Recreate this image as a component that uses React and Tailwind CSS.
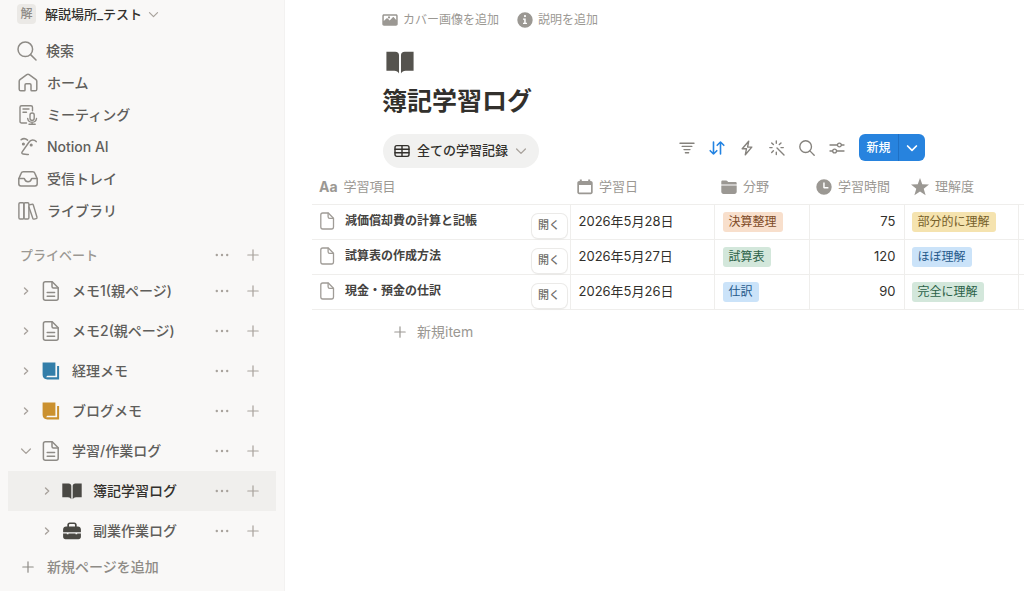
import clsx from 'clsx';

// Shared wrapper for outline icons
function Stroke({ className, box = 20, width = 1.3, children }) {
  return (
    <svg
      className={clsx('shrink-0', className)}
      viewBox={`0 0 ${box} ${box}`}
      fill="none"
      stroke="currentColor"
      strokeWidth={width}
      strokeLinecap="round"
      strokeLinejoin="round"
      aria-hidden="true"
    >
      {children}
    </svg>
  );
}

function Solid({ className, box = 20, children }) {
  return (
    <svg className={clsx('shrink-0', className)} viewBox={`0 0 ${box} ${box}`} fill="currentColor" aria-hidden="true">
      {children}
    </svg>
  );
}

const ChevronDown = ({ className, width = 1.3 }) => (
  <Stroke className={className} box={12} width={width}>
    <path d="M1.600 4l4.400 4.400L10.400 4" />
  </Stroke>
);

const ChevronRight = ({ className }) => (
  <Stroke className={className} box={12} width={1.4}>
    <path d="M4.500 3L7.700 6l-3.200 3" />
  </Stroke>
);

const Plus = ({ className }) => (
  <Stroke className={className} box={12} width={1.2}>
    <path d="M6 .8v10.4M.8 6h10.4" />
  </Stroke>
);

const Dots = () => (
  <svg className="h-1 w-3.5" viewBox="0 0 14 4" fill="currentColor" aria-hidden="true">
    <circle cx="1.800" cy="2" r="1.200" />
    <circle cx="7" cy="2" r="1.200" />
    <circle cx="12.200" cy="2" r="1.200" />
  </svg>
);

const SearchIcon = ({ className, width = 1.5 }) => (
  <Stroke className={className} width={width}>
    <circle cx="8.3" cy="8.3" r="7.300" />
    <path d="M13.6 13.6l5.400 5.400" />
  </Stroke>
);

const HomeIcon = () => (
  <Stroke className="size-5" width={1.5}>
    <path d="M1.2 8.2c0-.7.3-1.2.8-1.6l6.8-4.9c.7-.5 1.700-.5 2.400 0L18 6.600c.5.4.8.9.8 1.600v8c0 .9-.7 1.600-1.600 1.600h-3.400a.8.8 0 0 1-.8-.8v-5c0-.7-.5-1.200-1.200-1.200H8.200c-.7 0-1.200.5-1.200 1.200v5c0 .5-.4.8-.8.8H2.800c-.9 0-1.600-.7-1.600-1.600z" />
  </Stroke>
);

const MeetingIcon = () => (
  <Stroke className="size-5" width={1.4}>
    <path d="M8.500 18H3.600c-.9 0-1.600-.7-1.600-1.600V2.300C2 1.400 2.700.7 3.600.7h9.300c.9 0 1.600.7 1.600 1.600v3.400" />
    <path d="M5 4h6M5 7.200h3.500" />
    <rect x="12" y="8" width="4.200" height="7.400" rx="2.100" />
    <path d="M9.700 13.500c.3 2.200 2.100 3.700 4.400 3.700s4.100-1.500 4.400-3.700M14.100 17.200v2.100M11 19.300h6.200" />
  </Stroke>
);

const AiIcon = () => (
  <Stroke className="size-5" width={1.5}>
    <path d="M3.200 2.700C5 1.400 7.600 1.400 9.600 3.100M18.200 4.600C16.200 2.200 12.800 2.300 11.100 5L4.200 14.900c-.7 1-.3 2 .9 2.200 1.800.3 3.400.4 5.200.300" />
    <circle cx="5.400" cy="7" r=".8" fill="currentColor" />
    <circle cx="13.200" cy="8" r=".8" fill="currentColor" />
  </Stroke>
);

const InboxIcon = () => (
  <Stroke className="size-5" width={1.5}>
    <path d="M.8 9.800v5c0 1.300.9 2.200 2.200 2.200h14c1.300 0 2.200-.9 2.200-2.200v-5L17 4.600C16.600 3.500 15.800 2.800 14.600 2.800H5.400c-1.200 0-2 .7-2.400 1.800z" />
    <path d="M.9 9.600h5c.4 0 .7.300.8.700.4 1.500 1.500 2.400 3.300 2.400s2.900-.9 3.300-2.400c.1-.4.400-.7.800-.7h5" />
  </Stroke>
);

const LibraryIcon = () => (
  <Stroke className="size-5" width={1.4}>
    <rect x=".9" y="1.800" width="5" height="16.200" rx="1.200" />
    <rect x="5.900" y="1.800" width="5" height="16.200" rx="1.200" />
    <path d="M11.300 3.900l2.700-.7c.6-.2 1.100.2 1.300.8l3.700 12.300c.2.600-.2 1.200-.8 1.300l-2.100.5c-.6.200-1.200-.2-1.300-.8L10.900 6" />
  </Stroke>
);

const PageIcon = () => (
  <Stroke className="h-5 w-5" width={1.5}>
    <path d="M4.400.8h6.800l6 6v10.400c0 1.100-.9 2-2 2H4.400c-1.100 0-2-.9-2-2V2.800c0-1.100.9-2 2-2z" />
    <path d="M11 1v4.500c0 .9.600 1.500 1.500 1.500H17M6.200 11.600h7.400M6.200 15.200h7.400" />
  </Stroke>
);

const DocIcon = () => (
  <Stroke className="size-[18px]" box={18} width={1.3}>
    <path d="M4.700 1h5.600l5.200 5.200v8.900c0 1-.8 1.900-1.900 1.900H4.700c-1 0-1.900-.8-1.900-1.900V2.900C2.800 1.800 3.700 1 4.700 1z" />
    <path d="M10.100 1.200v3.600c0 1 .6 1.600 1.600 1.600h3.600" />
  </Stroke>
);

const JournalIcon = ({ className }) => (
  <Solid className={clsx('size-5', className)}>
    <path d="M1.600 1.400h12.800v13.400H6.200l-1.100 1.400h11V5h2v13.400H6.300c-2.700 0-4.700-1.700-4.700-4.400z" />
  </Solid>
);

const BookIcon = ({ className }) => (
  <Solid className={className}>
    <path d="M.3 2.600h6.300c1.700 0 2.700.9 2.700 2.500v13.200C8.500 17 7.600 16.300 6 16.300H.3z" />
    <path d="M19.700 2.600h-6.300c-1.700 0-2.700.9-2.700 2.500v13.200c.8-1.300 1.700-2 3.300-2h5.700z" />
  </Solid>
);

const BriefcaseIcon = () => (
  <Solid className="size-5 text-[#4a4944]">
    <path
      fillRule="evenodd"
      d="M5.300 5.500V3.800c0-1.400 1-2.400 2.400-2.400h4.600c1.400 0 2.400 1 2.400 2.400v1.700h1.200c1.700 0 3 1.300 3 3v2.800H1.100V8.500c0-1.700 1.300-3 3-3zm1.700 0h6V3.900c0-.5-.3-.8-.8-.8H7.800c-.5 0-.8.300-.8.800z"
    />
    <path d="M1.100 12.400h3.700v.9h1.700v-.9h7v.9h1.700v-.9h3.700v3.400c0 1.400-1 2.400-2.400 2.400h-13c-1.400 0-2.400-1-2.400-2.400z" />
  </Solid>
);

const CalendarIcon = () => (
  <Solid className="size-4" box={16}>
    <path
      fillRule="evenodd"
      d="M2.800.4h2v1.500h6.400V.4h2v1.500h.6c1.100 0 1.900.8 1.900 1.900v9.500c0 1.100-.8 1.900-1.900 1.900H2.200C1.100 15.200.3 14.400.3 13.300V3.800C.3 2.700 1.100 1.900 2.200 1.900h.6zM2 6v7c0 .4.2.6.600.6h10.800c.400 0 .600-.200.600-.600V6z"
    />
  </Solid>
);

const FolderIcon = () => (
  <Solid className="size-4" box={16}>
    <path d="M.3 5.400V2.800c0-.8.5-1.300 1.300-1.300h3.600c.500 0 .800.200 1.100.500l.8.900h7.200c.9 0 1.400.5 1.400 1.300v1.200z" />
    <path d="M.3 6.600h15.400v6c0 1.400-.9 2.300-2.300 2.300H2.600c-1.400 0-2.300-.9-2.300-2.300z" />
  </Solid>
);

const ClockIcon = () => (
  <Solid className="size-4" box={16}>
    <path
      fillRule="evenodd"
      d="M8 .3a7.700 7.700 0 1 0 0 15.400A7.700 7.700 0 0 0 8 .3zM7.200 3.600h1.500v4.300h3.700v1.500H8c-.5 0-.8-.3-.8-.8z"
    />
  </Solid>
);

const StarIcon = () => (
  <Solid className="size-[18px]" box={16}>
    <path d="M8 0l2 5.600 6 .2-4.700 3.700L13 15.400 8 12l-5 3.400 1.700-5.900L0 5.800l6-.2z" />
  </Solid>
);

const AaIcon = () => <span className="text-sm font-bold">Aa</span>;

const PictureIcon = () => (
  <Solid className="size-4" box={16}>
    <path
      fillRule="evenodd"
      d="M2 2.200h12c1 0 1.700.7 1.700 1.700v8.200c0 1-.7 1.700-1.700 1.700H2c-1 0-1.700-.7-1.700-1.700V3.900c0-1 .7-1.700 1.700-1.700zM1.800 4.200v4.900l2.600-2.500c.4-.4.900-.4 1.300 0l2 2 2.900-3.200c.4-.4 1-.4 1.400 0l2.200 2.500V4.200c0-.300-.200-.500-.500-.500H2.300c-.300 0-.500.200-.500.500zM7 4.300a1.100 1.100 0 1 1 0 2.200 1.100 1.100 0 0 1 0-2.200z"
    />
  </Solid>
);

const InfoIcon = () => (
  <Solid className="size-4" box={16}>
    <path
      fillRule="evenodd"
      d="M8 .3a7.700 7.700 0 1 0 0 15.400A7.700 7.700 0 0 0 8 .3zM8 3a1.100 1.100 0 1 1 0 2.200A1.100 1.100 0 0 1 8 3zM6 6.500h2.700v4.300H10v1.300H6v-1.300h1.200v-3H6z"
    />
  </Solid>
);

const TableIcon = () => (
  <Stroke className="size-4" box={16} width={1.4}>
    <rect x="1" y="2.600" width="14" height="10.800" rx="1.800" />
    <path d="M1 6.200h14M1 9.800h14M8 2.600v10.800" />
  </Stroke>
);

const toolbar = [
  {
    label: 'フィルター',
    icon: (
      <Stroke className="size-4" box={16} width={1.4}>
        <path d="M1 3.200h14M3.200 6.400h9.600M5 9.600h6M6.400 12.800h3.200" />
      </Stroke>
    ),
  },
  {
    label: '並べ替え',
    active: true,
    icon: (
      <Stroke className="size-4" box={16} width={1.6}>
        <path d="M4.500 2v12M1.200 10.700L4.500 14l3.300-3.300M11.500 14V2M8.200 5.300L11.500 2l3.300 3.300" />
      </Stroke>
    ),
  },
  {
    label: 'オートメーション',
    icon: (
      <Stroke className="size-4" box={16} width={1.4}>
        <path d="M9.700 1.200L3.200 8.700h4.300L6.300 14.800l6.500-7.700H8.600z" />
      </Stroke>
    ),
  },
  {
    label: 'AI',
    icon: (
      <Stroke className="size-4" box={16} width={1.4}>
        <path d="M8 8l7 7M7.300.9v2.300M7.300 12.300v2.300M.8 7.600h2.300M12 7.600h2.300M2.700 2.900l1.700 1.700M12 2.900l-1.700 1.700M2.700 12.400l1.700-1.700" />
      </Stroke>
    ),
  },
  { label: '検索', icon: <SearchIcon className="size-4" width={1.700} /> },
  {
    label: '設定',
    icon: (
      <Stroke className="size-4" box={16} width={1.3}>
        <path d="M1 5h7.400M12.400 5H15M1 11h2.600M7.600 11H15" />
        <circle cx="10.400" cy="5" r="1.900" />
        <circle cx="5.600" cy="11" r="1.900" />
      </Stroke>
    ),
  },
];

const navItems = [
  { label: 'ホーム', icon: <HomeIcon /> },
  { label: 'ミーティング', icon: <MeetingIcon /> },
  { label: 'Notion AI', icon: <AiIcon /> },
  { label: '受信トレイ', icon: <InboxIcon /> },
  { label: 'ライブラリ', icon: <LibraryIcon /> },
];

const pages = [
  { label: 'メモ1(親ページ)', icon: <PageIcon /> },
  { label: 'メモ2(親ページ)', icon: <PageIcon /> },
  { label: '経理メモ', icon: <JournalIcon className="text-[#337ea9]" /> },
  { label: 'ブログメモ', icon: <JournalIcon className="text-[#cb912f]" /> },
  { label: '学習/作業ログ', icon: <PageIcon />, open: true },
  { label: '簿記学習ログ', icon: <BookIcon className="size-5 text-[#4a4944]" />, child: true, active: true },
  { label: '副業作業ログ', icon: <BriefcaseIcon />, child: true },
];

const columns = [
  { label: '学習項目', icon: <AaIcon /> },
  { label: '学習日', icon: <CalendarIcon />, width: 'w-36' },
  { label: '分野', icon: <FolderIcon />, width: 'w-[95px]' },
  { label: '学習時間', icon: <ClockIcon />, width: 'w-[95px]' },
  { label: '理解度', icon: <StarIcon />, width: 'w-[114px]' },
];

const tagColors = {
  orange: 'bg-[#f8dfcc] text-[#7d4a26]',
  green: 'bg-[#d3e7db] text-[#2b6148]',
  blue: 'bg-[#cbe3f9] text-[#265a8b]',
  yellow: 'bg-[#f5e3af] text-[#75602a]',
};

const rows = [
  {
    name: '減価償却費の計算と記帳',
    date: '2026年5月28日',
    field: ['決算整理', 'orange'],
    minutes: 75,
    level: ['部分的に理解', 'yellow'],
  },
  {
    name: '試算表の作成方法',
    date: '2026年5月27日',
    field: ['試算表', 'green'],
    minutes: 120,
    level: ['ほぼ理解', 'blue'],
  },
  {
    name: '現金・預金の仕訳',
    date: '2026年5月26日',
    field: ['仕訳', 'blue'],
    minutes: 90,
    level: ['完全に理解', 'green'],
  },
];

function Tag({ value: [label, color] }) {
  return (
    <span className={clsx('flex h-5 w-fit items-center rounded-[3px] px-1.5 text-xs whitespace-nowrap', tagColors[color])}>
      {label}
    </span>
  );
}

function RowActions() {
  return (
    <div className="ml-auto flex items-center gap-[18px] text-[#a8a29c]">
      <button type="button" aria-label="その他">
        <Dots />
      </button>
      <button type="button" aria-label="ページを追加">
        <Plus className="size-3" />
      </button>
    </div>
  );
}

function Sidebar() {
  return (
    <aside className="w-[285px] shrink-0 border-r border-[#f3f2f1] bg-[#f9f8f7] text-sm font-medium text-[#5f5e5b]">
      <button type="button" className="flex h-7 items-center pl-[17px] text-[13px] text-[#32302c]">
        <span className="flex h-5 w-[19px] items-center justify-center rounded-sm bg-[#ebe9e6] text-xs text-[#8e8b86]">
          解
        </span>
        <span className="ml-[9px]">解説場所_テスト</span>
        <ChevronDown className="ml-1.5 size-[11px] text-[#a8a29c]" />
      </button>

      <nav className="mt-[7px]">
        <a href="#search" className="flex h-8 items-center gap-[9px] pl-[17px]">
          <SearchIcon className="size-5 text-[#8e8b86]" />
          検索
        </a>
        {navItems.map((item) => (
          <a key={item.label} href="#nav" className="flex h-8 items-center gap-[9px] pl-[18px]">
            <span className="text-[#8e8b86]">{item.icon}</span>
            {item.label}
          </a>
        ))}
      </nav>

      <div className="mt-3 flex h-8 items-center pr-[25px] pl-5 text-[13px] text-[#9b9893]">
        プライベート
        <RowActions />
      </div>

      <ul>
        {pages.map((page) => (
          <li
            key={page.label}
            className={clsx(
              'mx-2 flex h-10 items-center pr-[17px]',
              page.child ? 'pl-[33px]' : 'pl-3',
              page.active && 'bg-[#f0efed] text-[#32302c]'
            )}
          >
            <button type="button" aria-label="開閉" className="text-[#a8a29c]">
              {page.open ? <ChevronDown className="size-3" /> : <ChevronRight className="size-3" />}
            </button>
            <a href="#page" className="ml-[9px] flex items-center gap-[11px]">
              <span className="text-[#8e8b86]">{page.icon}</span>
              {page.label}
            </a>
            <RowActions />
          </li>
        ))}
      </ul>

      <button type="button" className="flex h-8 items-center gap-[13px] pl-[22px] text-[#8e8b86]">
        <Plus className="size-3" />
        新規ページを追加
      </button>
    </aside>
  );
}

function LogTable() {
  return (
    <table className="w-full table-fixed border-collapse text-left">
      <thead>
        <tr className="h-[34px] border-b border-[#efeeec]">
          {columns.map((col) => (
            <th key={col.label} scope="col" className={clsx('p-0 font-normal text-[#9b9893]', col.width)}>
              <span className="flex items-center gap-1.5 pl-[7px] text-[13px] whitespace-nowrap">
                {col.icon}
                {col.label}
              </span>
            </th>
          ))}
          <td className="w-1.5 p-0" />
        </tr>
      </thead>
      <tbody className="text-[13px] text-[#32302c]">
        {rows.map((row) => (
          <tr key={row.name} className="h-[35px] border-b border-[#efeeec] *:border-r *:border-[#efeeec] *:p-0 *:last:border-r-0">
            <td>
              <div className="flex h-[34px] items-center pr-[3px] pb-px pl-1.5 text-xs font-bold">
                <span className="text-[#a09c97]">
                  <DocIcon />
                </span>
                <span className="ml-[9px] text-[#45433f]">{row.name}</span>
                <button
                  type="button"
                  className="ml-auto h-6 w-[35px] self-end rounded-md bg-white text-[11px] font-medium text-[#6f6d69] shadow-[0_0_0_1px_#ebeae8,0_1px_2px_#00000014]"
                >
                  開く
                </button>
              </div>
            </td>
            <td>
              <div className="pl-2">{row.date}</div>
            </td>
            <td>
              <div className="pl-2">
                <Tag value={row.field} />
              </div>
            </td>
            <td>
              <div className="pr-2 text-right">{row.minutes}</div>
            </td>
            <td>
              <div className="pl-[7px]">
                <Tag value={row.level} />
              </div>
            </td>
            <td />
          </tr>
        ))}
      </tbody>
    </table>
  );
}

export default function App() {
  return (
    <div
      lang="ja"
      className="flex min-h-screen bg-white font-['Inter','Noto_Sans_CJK_JP',sans-serif] text-[#32302c]"
    >
      <Sidebar />

      <main className="min-w-0 flex-1 pl-[27px]">
        <header className="pl-[70px]">
          <div className="flex h-10 items-center gap-[18px] text-xs text-[#9b9893]">
            <button type="button" className="flex items-center gap-[5px]">
              <PictureIcon />
              カバー画像を追加
            </button>
            <button type="button" className="flex items-center gap-[5px]">
              <InfoIcon />
              説明を追加
            </button>
          </div>
          <BookIcon className="mt-2 ml-1 size-7 text-[#55534e]" />
          <h1 className="mt-[7px] text-[25px] leading-9 font-bold">簿記学習ログ</h1>
        </header>

        <div className="mt-[15px] flex items-start pr-[99px] pl-[71px]">
          <button
            type="button"
            className="flex h-[34px] items-center rounded-full bg-[#f1f1f0] pr-3 pl-[11px] text-[13px] font-medium"
          >
            <TableIcon />
            <span className="mx-[7px]">全ての学習記録</span>
            <ChevronDown className="size-3 text-[#a8a29c]" />
          </button>

          <div className="ml-auto flex h-[27px] items-center gap-3.5 text-[#85827d]">
            {toolbar.map((tool) => (
              <button key={tool.label} type="button" aria-label={tool.label} className={clsx(tool.active && 'text-[#2383e2]')}>
                {tool.icon}
              </button>
            ))}
          </div>

          <div className="ml-3.5 flex h-[27px] overflow-hidden rounded-md bg-[#2783de] text-white">
            <button type="button" className="w-10 border-r border-[#1f70c4] text-xs font-medium">
              新規
            </button>
            <button type="button" aria-label="新規オプション" className="flex w-[26px] items-center justify-center">
              <ChevronDown className="size-3" width={1.7} />
            </button>
          </div>
        </div>

        <div className="mt-0.5">
          <LogTable />
        </div>

        <button type="button" className="ml-[82px] flex h-11 items-center gap-[11px] text-sm text-[#9b9893]">
          <Plus className="size-3" />
          新規item
        </button>
      </main>
    </div>
  );
}
